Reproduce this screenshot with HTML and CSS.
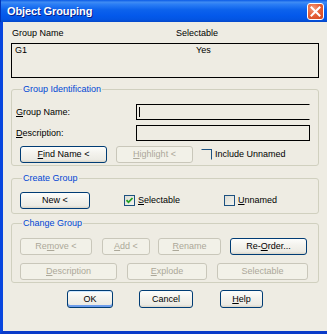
FILE: index.html
```html
<!DOCTYPE html>
<html>
<head>
<meta charset="utf-8">
<link rel="stylesheet" href="styles.css">
</head>
<body>
<div class="window">
  <div class="titlebar">
    <span class="title">Object Grouping</span>
    <span class="close"><svg width="11" height="11" viewBox="0 0 11 11"><path d="M1.5 1.5 L9.5 9.5 M9.5 1.5 L1.5 9.5" stroke="#fff" stroke-width="2" stroke-linecap="square"/></svg></span>
  </div>
  <div class="body">
    <div class="list-head">
      <span class="col1">Group Name</span>
      <span class="col2">Selectable</span>
    </div>
    <div class="listbox">
      <div class="list-row"><span class="col1">G1</span><span class="col2">Yes</span></div>
    </div>

    <fieldset class="group g-ident">
      <legend>Group Identification</legend>
      <div class="field-row">
        <label class="field-label"><u>G</u>roup Name:</label>
        <div class="input no-right"><span class="caret"></span></div>
      </div>
      <div class="field-row">
        <label class="field-label"><u>D</u>escription:</label>
        <div class="input"></div>
      </div>
      <div class="btn-row">
        <button class="btn w-find"><u>F</u>ind Name &lt;</button>
        <button class="btn w-high" disabled><u>H</u>ighlight &lt;</button>
        <span class="check partial"></span>
        <span class="check-label">Include Unnamed</span>
      </div>
    </fieldset>

    <fieldset class="group g-create">
      <legend>Create Group</legend>
      <div class="btn-row">
        <button class="btn w-new">New &lt;</button>
        <span class="check checked sel"><svg width="9" height="9" viewBox="0 0 9 9"><path d="M1.5 4.2 L3.5 6.3 L7.5 2" stroke="#21A121" stroke-width="1.8" fill="none"/></svg></span>
        <span class="check-label"><u>S</u>electable</span>
        <span class="check unn"></span>
        <span class="check-label"><u>U</u>nnamed</span>
      </div>
    </fieldset>

    <fieldset class="group g-change">
      <legend>Change Group</legend>
      <div class="btn-row">
        <button class="btn w-rem" disabled>Re<u>m</u>ove &lt;</button>
        <button class="btn w-add" disabled><u>A</u>dd &lt;</button>
        <button class="btn w-ren" disabled><u>R</u>ename</button>
        <button class="btn w-reo">Re-<u>O</u>rder...</button>
      </div>
      <div class="btn-row row2">
        <button class="btn w-desc" disabled><u>D</u>escription</button>
        <button class="btn w-exp" disabled><u>E</u>xplode</button>
        <button class="btn w-sel" disabled>Selectable</button>
      </div>
    </fieldset>

    <div class="dlg-buttons">
      <button class="btn default w-ok">OK</button>
      <button class="btn w-cancel">Cancel</button>
      <button class="btn w-help"><u>H</u>elp</button>
    </div>
  </div>
</div>
</body>
</html>
```

FILE: styles.css
```css
* { box-sizing: border-box; }
html, body { margin: 0; padding: 0; }
body {
  width: 327px;
  height: 334px;
  overflow: hidden;
  font-family: "Liberation Sans", Arial, sans-serif;
  font-size: 9px;
  line-height: 11px;
  color: #000;
  background: #0843DF;
}
.window {
  width: 327px;
  height: 334px;
  display: flex;
  flex-direction: column;
}
.titlebar {
  height: 22px;
  flex: none;
  display: flex;
  align-items: center;
  justify-content: space-between;
  padding: 0 3px 0 6px;
  background: linear-gradient(to bottom, #0A5AE6 0%, #3F8CF3 10%, #2A7DF5 20%, #0C62EC 45%, #0459EB 70%, #0355E3 88%, #0447C9 100%);
  border-left: 1px solid #0033B8;
}
.title {
  color: #fff;
  font-weight: bold;
  font-size: 11px;
  line-height: 13px;
  letter-spacing: -0.1px;
  text-shadow: 1px 1px 0 #0A1E8A;
  margin-top: 1px;
}
.close {
  width: 17px;
  height: 17px;
  margin-top: 1px;
  border: 1px solid #fff;
  border-radius: 3px;
  background: radial-gradient(circle at 35% 30%, #F39A7A 0%, #E5613A 45%, #D2441C 100%);
  display: flex;
  align-items: center;
  justify-content: center;
}
.body {
  flex: 1;
  background: #EEECE3;
  border-left: 3px solid #0846DE;
  border-bottom: 3px solid #0A3BC9;
  padding: 0 8px;
  display: flex;
  flex-direction: column;
}
.list-head {
  margin-top: 6px;
  display: flex;
  padding-left: 1px;
}
.col1 { width: 164px; }
.list-head .col1 { width: 164px; }
.listbox {
  margin-top: 4px;
  height: 35px;
  border: 1px solid #000;
  padding: 1px 3px;
}
.list-row { display: flex; }
.list-row .col1 { width: 181px; }

.group {
  margin: 0;
  border: 1px solid #D0D0BF;
  border-radius: 3px;
  padding: 0 8px 2px 8px;
  min-width: 0;
}
.group legend {
  color: #0046D5;
  padding: 0 1px;
  margin-left: 2px;
  line-height: 11px;
}
.g-ident { margin-top: 6px; padding-top: 9px; padding-bottom: 2px; }
.g-create { margin-top: 7px; padding-top: 8px; padding-bottom: 4px; }
.g-change { margin-top: 4px; padding-top: 9px; padding-bottom: 2px; }

.field-row {
  display: flex;
  align-items: center;
  height: 16px;
  margin-bottom: 5px;
}
.field-label {
  width: 120px;
  margin-left: -4px;
  flex: none;
}
.input {
  flex: 1;
  height: 16px;
  border: 1px solid #000;
  position: relative;
}
.input.no-right { border-right-color: transparent; }
.caret {
  position: absolute;
  left: 2px;
  top: 2px;
  width: 1px;
  height: 10px;
  background: #000;
}
.btn-row {
  display: flex;
  align-items: center;
}
.btn {
  font-family: inherit;
  font-size: 9px;
  line-height: 11px;
  height: 17px;
  padding: 0;
  color: #000;
  border: 1px solid #003C74;
  border-radius: 3px;
  background: linear-gradient(to bottom, #FDFDFB 0%, #F4F3EE 40%, #ECEBE4 85%, #D8D4C8 100%);
  text-align: center;
  flex: none;
}
.btn[disabled] {
  color: #ACA899;
  border-color: #C9C7BA;
  background: #F2F1E8;
}
.btn.default {
  box-shadow: inset 0 -2px 0 #6D9DEB, inset 0 1px 0 #CEE7FF;
}
.w-find { width: 87px; }
.w-high { width: 77px; margin-left: 9px; }
.check {
  width: 11px;
  height: 11px;
  flex: none;
  border: 1px solid #1C5180;
  background: linear-gradient(135deg, #DCDCD4 0%, #F4F4EE 100%);
  display: flex;
  align-items: center;
  justify-content: center;
}
.check.partial {
  margin-left: 8px;
  border-left-color: transparent;
  border-bottom-color: transparent;
  background: transparent;
}
.check-label { margin-left: 3px; }
.w-new { width: 70px; }
.check.sel { margin-left: 34px; }
.check.unn { margin-left: 44px; }

.w-rem { width: 72px; }
.w-add { width: 48px; margin-left: 10px; }
.w-ren { width: 63px; margin-left: 8px; }
.w-reo { width: 77px; margin-left: 9px; }
.row2 { margin-top: 8px; }
.w-desc { width: 97px; }
.w-exp { width: 80px; margin-left: 10px; }
.w-sel { width: 91px; margin-left: 10px; }

.dlg-buttons {
  display: flex;
  margin-top: 7px;
  padding-left: 56px;
}
.dlg-buttons .btn { height: 18px; }
.w-ok { width: 46px; }
.w-cancel { width: 54px; margin-left: 26px; }
.w-help { width: 43px; margin-left: 27px; }
```
